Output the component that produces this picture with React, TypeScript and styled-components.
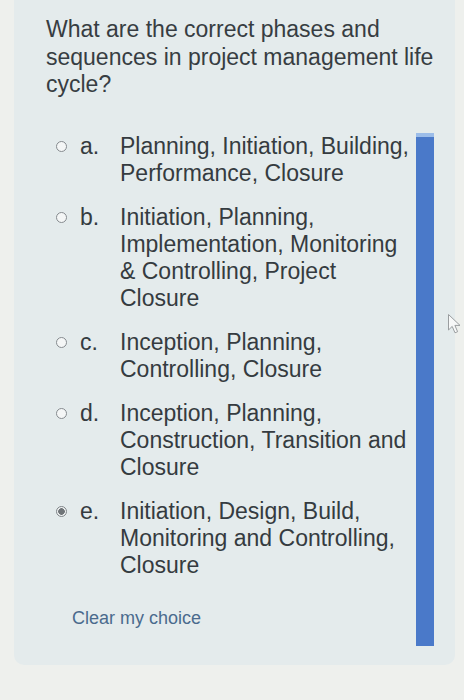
import React from "react";
import styled, { createGlobalStyle } from "styled-components";

const GlobalStyle = createGlobalStyle`
body {
    margin: 0;
    background: #eef0ed;
    font-family: "Liberation Sans", Arial, sans-serif;
}
`

const options = [
    { letter: "a.", text: "Planning, Initiation, Building, Performance, Closure" },
    { letter: "b.", text: "Initiation, Planning, Implementation, Monitoring & Controlling, Project Closure" },
    { letter: "c.", text: "Inception, Planning, Controlling, Closure" },
    { letter: "d.", text: "Inception, Planning, Construction, Transition and Closure" },
    { letter: "e.", text: "Initiation, Design, Build, Monitoring and Controlling, Closure" },
];

export default function App() {
    const selected = "e.";

    return (
        <Page>
            <GlobalStyle />
            <Panel>
                <Question>What are the correct phases and sequences in project management life cycle?</Question>
                <AnswerRow>
                    <AnswerList>
                        {options.map((option) => (
                            <Option key={option.letter}>
                                <Radio checked={option.letter === selected} />
                                <Letter>{option.letter}</Letter>
                                <OptionText>{option.text}</OptionText>
                            </Option>
                        ))}
                        <ClearChoice>Clear my choice</ClearChoice>
                    </AnswerList>
                    <Bar />
                </AnswerRow>
            </Panel>
            <Cursor width="16" height="22" viewBox="0 0 16 22">
                <path d="M1.5 1.5 L1.5 17 L5.2 13.4 L8 19.8 L10.6 18.7 L7.9 12.4 L13 12.4 Z" fill="#f7f8f8" stroke="#9a9d9f" strokeWidth="1" strokeLinejoin="round" />
            </Cursor>
        </Page>
    )
}

const Page = styled.div`
position: relative;
height: 700px;
padding-left: 14px;
overflow: hidden;
`

const Panel = styled.div`
box-sizing: border-box;
width: 441px;
background: #e4ebec;
border-radius: 0 0 10px 10px;
padding: 16px 20px 19px 32px;
`

const Question = styled.p`
margin: 0;
font-size: 23px;
line-height: 27.5px;
color: #373d42;
`

const AnswerRow = styled.div`
display: flex;
align-items: stretch;
gap: 2px;
margin-top: 34px;
`

const AnswerList = styled.div`
flex-shrink: 0;
display: flex;
flex-direction: column;
gap: 17px;
margin-left: 10px;
padding-bottom: 17px;
`

const Option = styled.div`
display: grid;
grid-template-columns: 11px 27px 294px;
column-gap: 13px;
align-items: start;
font-size: 23px;
line-height: 27px;
color: #353b40;
`

const Radio = styled.span<{ checked: boolean }>`
box-sizing: border-box;
width: 11px;
height: 11px;
margin-top: 8px;
border-radius: 50%;
border: 1.3px solid ${(p) => (p.checked ? "#7f8488" : "#868b8f")};
background: ${(p) => (p.checked ? "radial-gradient(circle, #6f7478 0 3px, #eef1f1 3.6px)" : "#f4f6f6")};
`

const Letter = styled.span`
display: block;
`

const OptionText = styled.span`
display: block;
`

const ClearChoice = styled.div`
margin: 11px 0 0 16px;
font-size: 18px;
line-height: 22px;
color: #4a6a8d;
`

const Bar = styled.div`
flex-shrink: 0;
box-sizing: border-box;
width: 18px;
background: #4a79c9;
border-top: 4px solid #9cbde9;
`

const Cursor = styled.svg`
position: absolute;
left: 447px;
top: 313px;
`
